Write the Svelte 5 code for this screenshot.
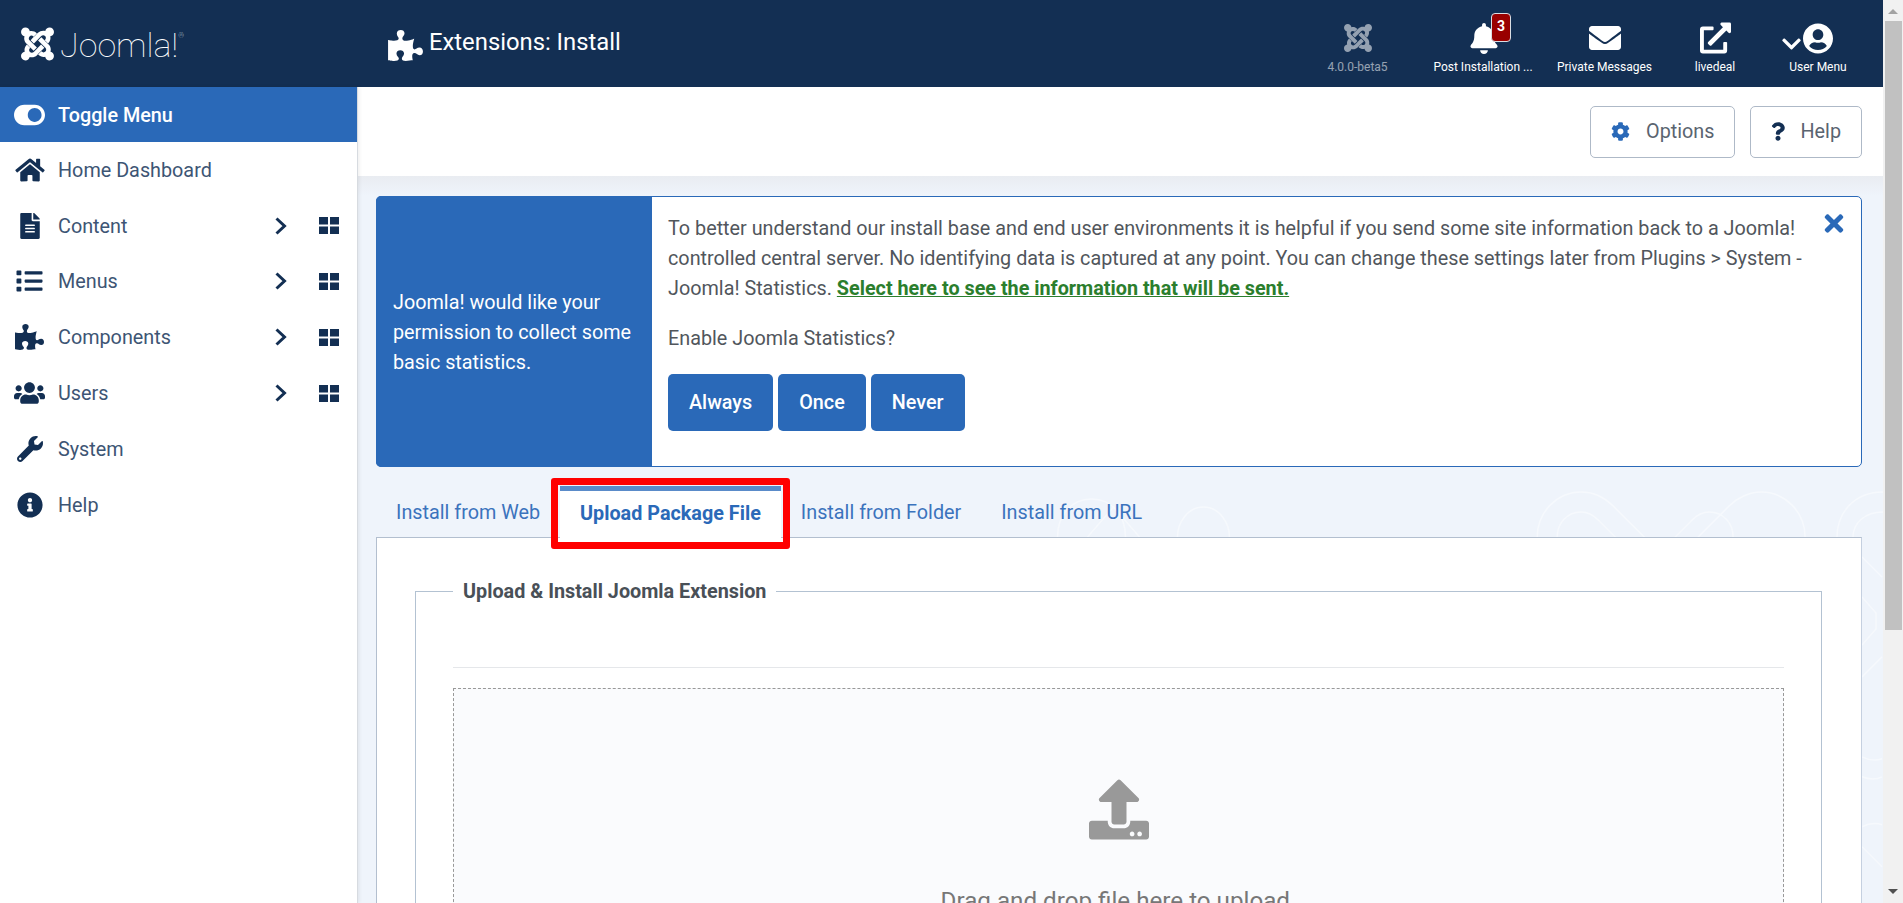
<script>
	const nav = [
		{ label: 'Home Dashboard', icon: 'home' },
		{ label: 'Content', icon: 'file', more: true },
		{ label: 'Menus', icon: 'list', more: true },
		{ label: 'Components', icon: 'puzzle', more: true },
		{ label: 'Users', icon: 'users', more: true },
		{ label: 'System', icon: 'wrench' },
		{ label: 'Help', icon: 'info' }
	];

	const icons = {
		home: ['0 0 576 512', 'M280.37 148.26L96 300.11V464a16 16 0 0 0 16 16l112.06-.29a16 16 0 0 0 15.92-16V368a16 16 0 0 1 16-16h64a16 16 0 0 1 16 16v95.64a16 16 0 0 0 16 16.05L464 480a16 16 0 0 0 16-16V300L295.67 148.26a12.19 12.19 0 0 0-15.3 0zM571.6 251.47L488 182.56V44.05a12 12 0 0 0-12-12h-56a12 12 0 0 0-12 12v72.61L318.47 43a48 48 0 0 0-61 0L4.34 251.47a12 12 0 0 0-1.6 16.9l25.5 31A12 12 0 0 0 45.15 301l235.22-193.74a12.19 12.19 0 0 1 15.3 0L530.9 301a12 12 0 0 0 16.9-1.6l25.5-31a12 12 0 0 0-1.7-16.93z'],
		file: ['0 0 384 512', 'M224 136V0H24C10.7 0 0 10.7 0 24v464c0 13.3 10.7 24 24 24h336c13.3 0 24-10.7 24-24V160H248c-13.2 0-24-10.8-24-24zm64 236c0 6.6-5.4 12-12 12H108c-6.6 0-12-5.4-12-12v-8c0-6.6 5.4-12 12-12h168c6.6 0 12 5.4 12 12v8zm0-64c0 6.6-5.4 12-12 12H108c-6.6 0-12-5.4-12-12v-8c0-6.6 5.4-12 12-12h168c6.6 0 12 5.4 12 12v8zm0-72v8c0 6.6-5.4 12-12 12H108c-6.6 0-12-5.4-12-12v-8c0-6.6 5.4-12 12-12h168c6.6 0 12 5.4 12 12zm96-114.1v6.1H256V0h6.1c6.4 0 12.5 2.5 17 7l97.9 98c4.5 4.5 7 10.6 7 16.9z'],
		list: ['0 0 512 512', 'M80 368H16a16 16 0 0 0-16 16v64a16 16 0 0 0 16 16h64a16 16 0 0 0 16-16v-64a16 16 0 0 0-16-16zm0-320H16A16 16 0 0 0 0 64v64a16 16 0 0 0 16 16h64a16 16 0 0 0 16-16V64a16 16 0 0 0-16-16zm0 160H16a16 16 0 0 0-16 16v64a16 16 0 0 0 16 16h64a16 16 0 0 0 16-16v-64a16 16 0 0 0-16-16zm416 176H176a16 16 0 0 0-16 16v32a16 16 0 0 0 16 16h320a16 16 0 0 0 16-16v-32a16 16 0 0 0-16-16zm0-320H176a16 16 0 0 0-16 16v32a16 16 0 0 0 16 16h320a16 16 0 0 0 16-16V80a16 16 0 0 0-16-16zm0 160H176a16 16 0 0 0-16 16v32a16 16 0 0 0 16 16h320a16 16 0 0 0 16-16v-32a16 16 0 0 0-16-16z'],
		puzzle: ['0 0 576 512', 'M519.442 288.651c-41.519 0-59.5 31.593-82.058 31.593C377.409 320.244 432 144 432 144s-196.288 80-196.288-3.297c0-35.827 36.288-46.25 36.288-85.985C272 19.216 243.885 0 210.539 0c-34.654 0-66.366 18.891-66.366 56.346 0 41.364 31.711 59.277 31.711 81.75C175.885 207.719 0 166.758 0 166.758v333.237s178.635 41.047 178.635-28.662c0-22.473-40-40.107-40-81.471 0-37.456 29.25-56.346 63.577-56.346 33.673 0 61.788 19.216 61.788 54.717 0 39.735-36.288 50.158-36.288 85.985 0 60.803 129.675 25.73 181.23 25.73 0 0-34.725-120.101 25.827-120.101 35.962 0 46.423 36.152 86.308 36.152C556.712 416 576 387.99 576 354.443c0-34.199-18.962-65.792-56.558-65.792z'],
		users: ['0 0 640 512', 'M96 224c35.3 0 64-28.7 64-64s-28.7-64-64-64-64 28.7-64 64 28.7 64 64 64zm448 0c35.3 0 64-28.7 64-64s-28.7-64-64-64-64 28.7-64 64 28.7 64 64 64zm32 32h-64c-17.6 0-33.5 7.1-45.1 18.6 40.3 22.1 68.9 62 75.1 109.4h66c17.7 0 32-14.3 32-32v-32c0-35.3-28.7-64-64-64zm-256 0c61.9 0 112-50.1 112-112S381.9 32 320 32 208 82.1 208 144s50.1 112 112 112zm76.8 32h-8.3c-20.8 10-43.9 16-68.5 16s-47.6-6-68.5-16h-8.3C179.6 288 128 339.6 128 403.2V432c0 26.5 21.5 48 48 48h288c26.5 0 48-21.5 48-48v-28.8c0-63.6-51.6-115.2-115.2-115.2zm-223.7-13.4C161.5 263.1 145.6 256 128 256H64c-35.3 0-64 28.7-64 64v32c0 17.7 14.3 32 32 32h65.9c6.3-47.4 34.9-87.3 75.2-109.4z'],
		wrench: ['0 0 512 512', 'M507.73 109.1c-2.24-9.03-13.54-12.09-20.12-5.51l-74.36 74.36-67.88-11.31-11.31-67.88 74.36-74.36c6.62-6.62 3.43-17.9-5.66-20.16-47.38-11.74-99.55.91-136.58 37.93-39.64 39.64-50.55 97.1-34.05 147.2L18.74 402.76c-24.99 24.99-24.99 65.51 0 90.5 24.99 24.99 65.51 24.99 90.5 0l213.21-213.21c50.12 16.71 107.47 5.68 147.37-34.22 37.07-37.07 49.7-89.32 37.91-136.73zM64 472c-13.25 0-24-10.75-24-24 0-13.26 10.75-24 24-24s24 10.74 24 24c0 13.25-10.75 24-24 24z'],
		info: ['0 0 512 512', 'M256 8C119.043 8 8 119.083 8 256c0 136.997 111.043 248 248 248s248-111.003 248-248C504 119.083 392.957 8 256 8zm0 110c23.196 0 42 18.804 42 42s-18.804 42-42 42-42-18.804-42-42 18.804-42 42-42zm56 254c0 6.627-5.373 12-12 12h-88c-6.627 0-12-5.373-12-12v-24c0-6.627 5.373-12 12-12h12v-64h-12c-6.627 0-12-5.373-12-12v-24c0-6.627 5.373-12 12-12h64c6.627 0 12 5.373 12 12v100h12c6.627 0 12 5.373 12 12v24z'],
		cog: ['0 0 512 512', 'M487.4 315.7l-42.6-24.6c4.3-23.2 4.3-47 0-70.2l42.6-24.6c4.9-2.8 7.1-8.6 5.5-14-11.1-35.6-30-67.8-54.7-94.6-3.8-4.1-10-5.1-14.8-2.3L380.8 110c-17.9-15.4-38.5-27.3-60.8-35.1V25.8c0-5.6-3.9-10.5-9.4-11.7-36.7-8.2-74.3-7.8-109.2 0-5.5 1.2-9.4 6.1-9.4 11.7V75c-22.2 7.9-42.8 19.8-60.8 35.1L88.7 85.5c-4.9-2.8-11-1.9-14.8 2.3-24.7 26.7-43.6 58.9-54.7 94.6-1.7 5.4.6 11.2 5.5 14L67.3 221c-4.3 23.2-4.3 47 0 70.2l-42.6 24.6c-4.9 2.8-7.1 8.6-5.5 14 11.1 35.6 30 67.8 54.7 94.6 3.8 4.1 10 5.1 14.8 2.3l42.6-24.6c17.9 15.4 38.5 27.3 60.8 35.1v49.2c0 5.6 3.9 10.5 9.4 11.7 36.7 8.2 74.3 7.8 109.2 0 5.5-1.2 9.4-6.1 9.4-11.7v-49.2c22.2-7.9 42.8-19.8 60.8-35.1l42.6 24.6c4.9 2.8 11 1.9 14.8-2.3 24.7-26.7 43.6-58.9 54.7-94.6 1.5-5.5-.7-11.3-5.6-14.1zM256 336c-44.1 0-80-35.9-80-80s35.9-80 80-80 80 35.9 80 80-35.9 80-80 80z'],
		question: ['0 0 384 512', 'M202.021 0C122.202 0 70.503 32.703 29.914 91.026c-7.363 10.58-5.093 25.086 5.178 32.874l43.138 32.709c10.373 7.865 25.132 6.026 33.253-4.148 25.049-31.381 43.63-49.449 82.757-49.449 30.764 0 68.816 19.799 68.816 49.631 0 22.552-18.617 34.134-48.993 51.164-35.423 19.86-82.299 44.576-82.299 106.405V320c0 13.255 10.745 24 24 24h72.471c13.255 0 24-10.745 24-24v-5.773c0-42.86 125.268-44.645 125.268-160.627C377.504 66.256 286.902 0 202.021 0zM192 373.459c-38.196 0-69.271 31.075-69.271 69.271 0 38.195 31.075 69.27 69.271 69.27s69.271-31.075 69.271-69.271-31.075-69.27-69.271-69.27z'],
		times: ['0 0 352 512', 'M242.72 256l100.07-100.07c12.28-12.28 12.28-32.19 0-44.48l-22.24-22.24c-12.28-12.28-32.19-12.28-44.48 0L176 189.28 75.93 89.21c-12.28-12.28-32.19-12.28-44.48 0L9.21 111.45c-12.28 12.28-12.28 32.19 0 44.48L109.28 256 9.21 356.07c-12.28 12.28-12.28 32.19 0 44.48l22.24 22.24c12.28 12.28 32.2 12.28 44.48 0L176 322.72l100.07 100.07c12.28 12.28 32.2 12.28 44.48 0l22.24-22.24c12.28-12.28 12.28-32.19 0-44.48L242.72 256z'],
		bell: ['0 0 448 512', 'M224 512c35.32 0 63.97-28.65 63.97-64H160.03c0 35.35 28.65 64 63.97 64zm215.39-149.71c-19.32-20.76-55.47-51.99-55.47-154.29 0-77.7-54.48-139.9-127.94-155.16V32c0-17.67-14.32-32-31.98-32s-31.98 14.33-31.98 32v20.84C118.56 68.1 64.08 130.3 64.08 208c0 102.3-36.15 133.53-55.47 154.29-6 6.45-8.66 14.16-8.61 21.71.11 16.4 12.98 32 32.1 32h383.8c19.12 0 32-15.6 32.1-32 .05-7.55-2.61-15.27-8.61-21.71z'],
		envelope: ['0 0 512 512', 'M502.3 190.8c3.9-3.1 9.7-.2 9.7 4.7V400c0 26.5-21.5 48-48 48H48c-26.5 0-48-21.5-48-48V195.6c0-5 5.7-7.8 9.7-4.7 22.4 17.4 52.1 39.5 154.1 113.6 21.1 15.4 56.7 47.8 92.2 47.6 35.7.3 72-32.8 92.3-47.6 102-74.1 131.6-96.3 154-113.7zM256 320c23.2.4 56.6-29.2 73.4-41.4 132.7-96.3 142.8-104.7 173.4-128.7 5.8-4.5 9.2-11.5 9.2-18.9v-19c0-26.5-21.5-48-48-48H48C21.5 64 0 85.5 0 112v19c0 7.4 3.4 14.3 9.2 18.9 30.6 23.9 40.7 32.4 173.4 128.7 16.8 12.2 50.2 41.8 73.4 41.4z'],
		external: ['0 0 512 512', 'M432,320H400a16,16,0,0,0-16,16V448H64V128H208a16,16,0,0,0,16-16V80a16,16,0,0,0-16-16H48A48,48,0,0,0,0,112V464a48,48,0,0,0,48,48H400a48,48,0,0,0,48-48V336A16,16,0,0,0,432,320ZM488,0h-128c-21.37,0-32.05,25.91-17,41l35.73,35.73L135,320.37a24,24,0,0,0,0,34L157.67,377a24,24,0,0,0,34,0L435.28,133.32,471,169c15,15,41,4.5,41-17V24A24,24,0,0,0,488,0Z'],
		user: ['0 0 496 512', 'M248 8C111 8 0 119 0 256s111 248 248 248 248-111 248-248S385 8 248 8zm0 96c48.6 0 88 39.4 88 88s-39.4 88-88 88-88-39.4-88-88 39.4-88 88-88zm0 344c-58.7 0-111.3-26.6-146.5-68.2 18.8-35.4 55.6-59.8 98.5-59.8 2.4 0 4.8.4 7.1 1.1 13 4.2 26.6 6.9 40.9 6.9 14.3 0 28-2.7 40.9-6.9 2.3-.7 4.7-1.1 7.1-1.1 42.9 0 79.7 24.4 98.5 59.8C359.3 421.4 306.7 448 248 448z'],
		down: ['0 0 448 512', 'M207.029 381.476L12.686 187.132c-9.373-9.373-9.373-24.569 0-33.941l22.667-22.667c9.357-9.357 24.522-9.375 33.901-.04L224 284.505l154.745-154.021c9.379-9.335 24.544-9.317 33.901.04l22.667 22.667c9.373 9.373 9.373 24.569 0 33.941L240.971 381.476c-9.373 9.372-24.569 9.372-33.942 0z'],
		upload: ['0 0 512 512', 'M296 384h-80c-13.3 0-24-10.7-24-24V192h-87.7c-17.8 0-26.7-21.5-14.1-34.1L242.3 5.7c7.5-7.5 19.8-7.5 27.3 0l152.2 152.2c12.6 12.6 3.7 34.1-14.1 34.1H320v168c0 13.3-10.7 24-24 24zm216-8v112c0 13.3-10.7 24-24 24H24c-13.3 0-24-10.7-24-24V376c0-13.3 10.7-24 24-24h136v8c0 30.9 25.1 56 56 56h80c30.9 0 56-25.1 56-56v-8h136c13.3 0 24 10.7 24 24zm-124 88c0-11-9-20-20-20s-20 9-20 20 9 20 20 20 20-9 20-20zm64 0c0-11-9-20-20-20s-20 9-20 20 9 20 20 20 20-9 20-20z'],
		toggle: ['0 0 576 512', 'M384 64H192C86 64 0 150 0 256s86 192 192 192h192c106 0 192-86 192-192S490 64 384 64zm0 320c-70.8 0-128-57.3-128-128 0-70.8 57.3-128 128-128 70.8 0 128 57.3 128 128 0 70.8-57.3 128-128 128z']
	};

	const joomlaArm = 'M.6 92.1C.6 58.8 27.4 32 60.4 32c30 0 54.5 21.9 59.2 50.2 32.6-7.6 67.1.6 96.5 30l-44.3 44.3c-20.5-20.5-42.6-16.3-55.4-3.5-14.3 14.3-14.3 37.9 0 52.2l99.5 99.5-44 44.3c-87.7-87.2-49.7-49.7-99.8-99.7-26.8-26.5-35-64.8-24.8-98.9C20.4 144.6.6 120.7.6 92.1z';

	const tabs = ['Install from Web', 'Upload Package File', 'Install from Folder', 'Install from URL'];
</script>

{#snippet icon(name, cls)}
	<svg class={cls} viewBox={icons[name][0]} fill="currentColor" aria-hidden="true"><path d={icons[name][1]} /></svg>
{/snippet}

{#snippet joomla(cls)}
	<svg class={cls} viewBox="0 0 448 512" fill="currentColor" aria-hidden="true">
		{#each [0, 90, 180, 270] as a}
			<path d={joomlaArm} transform="rotate({a} 224 256)" />
		{/each}
	</svg>
{/snippet}

<div class="app">
	<div class="page">
		<header class="top">
			<div class="brand">
				{@render joomla('brand-mark')}
				<span class="wordmark">Joomla!<sup>®</sup></span>
			</div>
			<div class="title">
				{@render icon('puzzle', 'title-icon')}
				<h1>Extensions: Install</h1>
			</div>
			<div class="status">
				<div class="stat version">
					{@render joomla('stat-joomla')}
					<span>4.0.0-beta5</span>
				</div>
				<div class="stat post">
					<div class="bell-wrap">
						{@render icon('bell', 'stat-bell')}
						<b class="badge">3</b>
					</div>
					<span>Post Installation ...</span>
				</div>
				<div class="stat msgs">
					{@render icon('envelope', 'stat-mail')}
					<span>Private Messages</span>
				</div>
				<div class="stat site">
					{@render icon('external', 'stat-ext')}
					<span>livedeal</span>
				</div>
				<div class="stat usr">
					<div class="user-wrap">
						{@render icon('down', 'stat-down')}
						{@render icon('user', 'stat-user')}
					</div>
					<span>User Menu</span>
				</div>
			</div>
		</header>

		<div class="body">
			<aside class="side">
				<div class="toggle">
					{@render icon('toggle', 'toggle-icon')}
					<span>Toggle Menu</span>
				</div>
				<nav>
					{#each nav as item}
						<a class="nav-item" href="#top">
							<span class="nav-icon">{@render icon(item.icon, 'ni-' + item.icon)}</span>
							<span class="nav-label">{item.label}</span>
							{#if item.more}
								<svg class="chev" viewBox="0 0 14 20" fill="none" stroke="currentColor" stroke-width="3"><path d="M2.5 2.5 10.5 10l-8 7.5" /></svg>
								<svg class="grid" viewBox="0 0 20 17" fill="currentColor"><rect width="9" height="7.5" /><rect x="11" width="9" height="7.5" /><rect y="9.5" width="9" height="7.5" /><rect x="11" y="9.5" width="9" height="7.5" /></svg>
							{/if}
						</a>
					{/each}
				</nav>
			</aside>

			<main class="main">
				<svg class="deco" viewBox="0 0 1526 816" fill="none" stroke="#f6f9fd" stroke-width="1.5" aria-hidden="true">
					<path d="M1180 450c0-25 20-45 44-45 14 0 24 6 32 14l58 58 58-58c8-8 20-14 32-14 24 0 44 20 44 45" />
					<path d="M1200 450c0-14 10-25 24-25 7 0 12 3 17 8l35 35M1376 450c0-14-10-25-24-25-7 0-12 3-17 8l-35 35" />
					<path d="M1480 450c0-25 18-45 46-45M1496 450c0-14 12-25 30-25" />
					<path d="M700 450c0-22 14-38 34-38s34 16 34 38M730 450l26-30 26 30M820 450c0-14 10-30 26-30s26 16 26 30" />
					<path d="M1505 470l20 20M1505 510l14 16v16l-14 16M1505 590l20-20M1505 670c8 4 14 4 20 2M1505 690c8 3 14 3 20 0M1505 740c8-4 14-4 20-2M1505 760l20 20" />
				</svg>

				<div class="toolbar">
					<button class="tool">{@render icon('cog', 'tool-cog')}<span>Options</span></button>
					<button class="tool">{@render icon('question', 'tool-q')}<span>Help</span></button>
				</div>

				<div class="content">
					<section class="alert">
						<div class="alert-side">Joomla! would like your permission to collect some basic statistics.</div>
						<div class="alert-body">
							<p>To better understand our install base and end user environments it is helpful if you send some site information back to a Joomla! controlled central server. No identifying data is captured at any point. You can change these settings later from Plugins &gt; System - Joomla! Statistics. <a href="#top">Select here to see the information that will be sent.</a></p>
							<p>Enable Joomla Statistics?</p>
							<div class="choices">
								<button>Always</button>
								<button>Once</button>
								<button>Never</button>
							</div>
						</div>
						{@render icon('times', 'close')}
					</section>

					<div class="tabs">
						{#each tabs as tab, i}
							<div class="tab" class:active={i === 1}>
								{tab}
								{#if i === 1}<span class="marker"></span>{/if}
							</div>
						{/each}
					</div>

					<div class="panel">
						<fieldset>
							<legend>Upload &amp; Install Joomla Extension</legend>
							<hr />
							<div class="drop">
								{@render icon('upload', 'drop-icon')}
								<p>Drag and drop file here to upload.</p>
							</div>
						</fieldset>
					</div>
				</div>
			</main>
		</div>
	</div>

	<div class="scroll">
		<span class="arrow up"></span>
		<span class="thumb"></span>
		<span class="arrow down"></span>
	</div>
</div>

<style>
	:global(body) { font-family: Roboto, "Liberation Sans", sans-serif; background: #fff; }
	:global(*) { box-sizing: border-box; }

	.app { display: flex; height: 903px; overflow: hidden; }
	.page { flex: 1; min-width: 0; display: flex; flex-direction: column; }

	.top { height: 87px; flex: none; display: flex; align-items: stretch; background: #132f53; color: #fff; }
	.brand { width: 358px; flex: none; display: flex; align-items: center; padding-left: 21px; }
	:global(.brand-mark) { width: 33px; height: 38px; margin-right: 6px; }
	.wordmark { font-family: Roboto, sans-serif; font-weight: 100; font-size: 34px; line-height: 1; position: relative; top: 1px; }
	.wordmark sup { font-size: 7px; vertical-align: 19px; line-height: 0; }
	.title { display: flex; align-items: center; padding-left: 30px; }
	:global(.title-icon) { width: 35px; height: 31px; margin-top: 3px; margin-right: 6px; }
	.title h1 { margin: 0 0 1px; font-size: 23.8px; font-weight: 400; line-height: 1; }

	.status { margin-left: auto; display: flex; align-items: stretch; padding-right: 37px; }
	.stat { position: relative; display: flex; flex-direction: column; align-items: center; font-size: 12px; line-height: 14px; padding-top: 22px; }
	.stat span { position: absolute; top: 60px; white-space: nowrap; }
	.stat > :global(svg), .bell-wrap, .user-wrap { height: 32px; }
	.version { width: 59px; margin-right: 48px; color: #fff; }
	.version span { opacity: 0.55; }
	:global(.stat-joomla) { width: 30px; height: 32px; opacity: 0.55; }
	.post { width: 96px; margin-right: 27px; }
	.bell-wrap { position: relative; width: 28px; margin-left: 2px; }
	:global(.stat-bell) { width: 28px; height: 31px; margin-top: 1px; display: block; }
	.badge { position: absolute; left: 21px; top: -9px; width: 20px; height: 29px; border: 1px solid #d9dde3; border-radius: 4px; background: #990000; font-size: 14px; line-height: 25px; text-align: center; font-weight: 700; }
	.msgs { width: 93px; margin-right: 44px; }
	:global(.stat-mail) { width: 32px; height: 32px; }
	.site { width: 40px; margin-right: 55px; }
	:global(.stat-ext) { width: 31px; height: 32px; }
	.usr { width: 56px; }
	.user-wrap { display: flex; align-items: flex-end; margin-left: -22px; }
	:global(.stat-down) { width: 19px; height: 22px; margin-right: 2px; margin-bottom: -1px; }
	:global(.stat-user) { width: 30px; height: 31px; }

	.body { flex: 1; display: flex; min-height: 0; }
	.side { width: 358px; flex: none; background: #fff; border-right: 1px solid #d7dbe0; box-shadow: 1px 0 4px rgba(0, 0, 0, 0.08); position: relative; z-index: 2; }
	.toggle { height: 55px; display: flex; align-items: center; background: #2a69b8; color: #fff; font-size: 19.8px; font-weight: 500; padding-left: 14px; }
	.toggle span { padding-top: 1px; }
	:global(.toggle-icon) { width: 31px; height: 28px; margin-right: 13px; }
	.nav-item { height: 55.8px; display: flex; align-items: center; color: #132f53; text-decoration: none; padding-left: 14px; }
	.nav-icon { width: 31px; margin-right: 13px; display: flex; justify-content: center; }
	.nav-icon :global(svg) { height: 26px; }
	.nav-icon :global(.ni-home) { width: 30px; }
	.nav-icon :global(.ni-file) { width: 20px; height: 26px; }
	.nav-icon :global(.ni-list) { width: 27px; height: 26px; }
	.nav-icon :global(.ni-puzzle) { width: 29px; height: 26px; }
	.nav-icon :global(.ni-users) { width: 32px; height: 26px; }
	.nav-icon :global(.ni-wrench) { width: 26px; height: 26px; }
	.nav-icon :global(.ni-info) { width: 26px; height: 26px; }
	.nav-label { flex: 1; font-size: 19.8px; color: #3d5574; padding-top: 1px; }
	.chev { width: 14px; height: 20px; margin-right: 31px; }
	.grid { width: 20px; height: 17px; margin-right: 18px; }

	.main { flex: 1; min-width: 0; position: relative; background: #eff4fb; }
	.deco { position: absolute; left: 0; top: 0; width: 100%; height: 100%; }
	.toolbar { position: relative; height: 89px; display: flex; justify-content: flex-end; align-items: center; gap: 15px; padding: 0 21px 0 0; background: #fff; }
	.tool { height: 52px; display: flex; align-items: center; padding: 0 20px; background: #fff; border: 1px solid #aeb9c7; border-radius: 5px; font: 400 19.8px Roboto, sans-serif; color: #5a6470; }
	:global(.tool-cog) { width: 19px; height: 19px; color: #2a69b8; margin-right: 16px; }
	:global(.tool-q) { width: 14px; height: 19px; color: #132f53; margin-right: 15px; }

	.content { position: relative; padding: 20px 21px 0 18px; background: linear-gradient(#e9ecf1, rgba(239, 244, 251, 0) 20px); }
	.alert { position: relative; height: 271px; display: flex; background: #fff; border: 1px solid #2a69b8; border-radius: 5px; font-size: 19.8px; line-height: 30px; color: #51565c; }
	.alert-side { width: 276px; flex: none; display: flex; align-items: center; padding: 2px 17px 0; background: #2a69b8; color: #fff; margin: -1px 0 -1px -1px; border-radius: 5px 0 0 5px; }
	.alert-body { flex: 1; padding: 17px 15px 0 16px; }
	.alert-body p { margin: 0 0 20px; }
	.alert-body a { color: #2b7e2d; font-weight: 700; }
	.choices { display: flex; gap: 5px; margin-top: 18px; }
	.choices button { height: 57px; padding: 0 21px; border: 0; border-radius: 5px; background: #2a69b8; color: #fff; font: 500 19.8px Roboto, sans-serif; }
	:global(.close) { position: absolute; right: 17px; top: 13px; width: 20px; height: 27px; color: #2a69b8; }

	.tabs { display: flex; margin-top: 20px; position: relative; z-index: 1; }
	.tab { position: relative; height: 50px; display: flex; align-items: center; padding: 0 20px; font-size: 19.8px; color: #3b73bd; }
	.tab.active { height: 52px; margin-top: -1px; margin-bottom: -1px; padding-bottom: 3px; background: #fff; font-weight: 700; color: #2a69b8; border-top: 5px solid #5a8bc9; }
	.marker { position: absolute; left: -9px; right: -9px; top: -13px; bottom: -11px; border: 7px solid #ff0000; border-radius: 3px; }

	.panel { background: #fff; border: 1px solid #b3bfcf; border-bottom: 0; border-right-color: #c5d0e0; padding: 38px 39px 0 38px; }
	fieldset { margin: 0; padding: 0 37px; border: 1px solid #b3c2d2; border-bottom: 0; min-width: 0; }
	legend { position: relative; top: 1px; margin-left: 0; padding: 0 10px; font-size: 19.8px; line-height: 30px; font-weight: 700; color: #495057; }
	hr { margin: 61px 0 20px; border: 0; border-top: 1px solid #e5e7ea; }
	.drop { min-height: 400px; display: flex; flex-direction: column; align-items: center; padding-top: 90px; background: #fafbfd; border: 1px dashed #999; }
	:global(.drop-icon) { width: 60px; height: 61px; color: #999; }
	.drop p { margin: 46px 0 0; font-size: 24.2px; line-height: 30px; color: #777; }

	.scroll { width: 20px; flex: none; display: flex; flex-direction: column; align-items: center; background: #f1f1f1; }
	.arrow { width: 0; height: 0; flex: none; border-left: 5px solid transparent; border-right: 5px solid transparent; }
	.arrow.up { margin-top: 9px; margin-bottom: 7px; border-bottom: 5px solid #a3a3a3; }
	.arrow.down { margin-top: auto; margin-bottom: 9px; border-top: 5px solid #505050; }
	.thumb { width: 17px; height: 609px; background: #c1c1c1; }
</style>
